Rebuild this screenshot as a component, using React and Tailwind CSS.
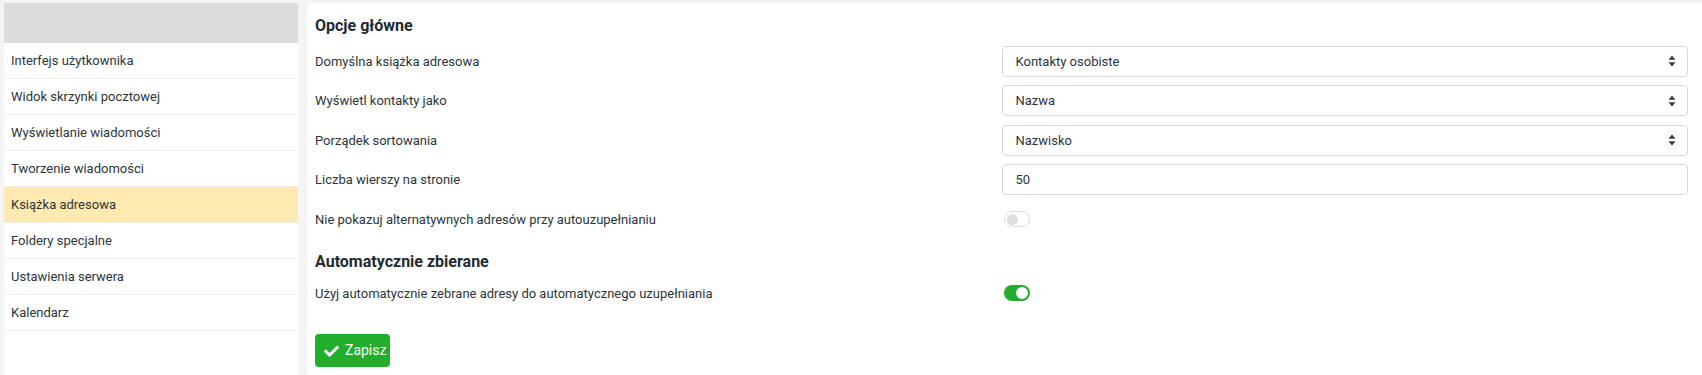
const font = { fontFamily: "Roboto, 'Open Sans', sans-serif" };

const menu = [
  "Interfejs użytkownika",
  "Widok skrzynki pocztowej",
  "Wyświetlanie wiadomości",
  "Tworzenie wiadomości",
  "Książka adresowa",
  "Foldery specjalne",
  "Ustawienia serwera",
  "Kalendarz",
];

function Arrows() {
  return (
    <svg width="8" height="12" viewBox="0 0 8 12" className="shrink-0">
      <path d="M4 0.5 L7.5 4.8 L0.5 4.8 Z" fill="#3a3f44" />
      <path d="M4 11.5 L7.5 7.2 L0.5 7.2 Z" fill="#3a3f44" />
    </svg>
  );
}

function Select({ value }) {
  return (
    <div className="flex h-[31px] w-full items-center justify-between rounded-[4px] border border-[#d4d8dc] bg-white pl-[13px] pr-[11px] text-[13px] text-[#2c363a]">
      <span>{value}</span>
      <Arrows />
    </div>
  );
}

function Input({ value }) {
  return (
    <div className="flex h-[31px] w-full items-center rounded-[4px] border border-[#d4d8dc] bg-white pl-[13px] text-[13px] text-[#2c363a]">
      {value}
    </div>
  );
}

function Toggle({ on }) {
  return on ? (
    <div className="ml-[2px] flex h-[16px] w-[26px] items-center justify-end rounded-full bg-[#22ab2c] pr-[2px]">
      <div className="h-[12px] w-[12px] rounded-full bg-white" />
    </div>
  ) : (
    <div className="ml-[2px] flex h-[16px] w-[26px] items-center rounded-full border border-[#dcdcdc] bg-white pl-[2px]">
      <div className="h-[11px] w-[11px] rounded-full bg-[#dddddd]" />
    </div>
  );
}

function Row({ label, children }) {
  return (
    <div className="grid h-[39.5px] grid-cols-2 items-center">
      <div className="text-[13px] text-[#2c363a]">{label}</div>
      <div className="flex items-center">{children}</div>
    </div>
  );
}

export default function App() {
  return (
    <div className="flex h-[375px] w-[1702px] bg-[#f4f4f4] pt-[3px] pl-[4px]" style={font}>
      {/* sidebar */}
      <div className="w-[294px] shrink-0 bg-white">
        <div className="h-[40px] bg-[#dddddd]" />
        {menu.map((m) => (
          <div
            key={m}
            className={
              "flex h-[36px] items-center border-b border-[#eeeeee] pl-[7px] text-[13px] text-[#2c363a] " +
              (m === "Książka adresowa" ? "bg-[#fee9b0]" : "")
            }
          >
            {m}
          </div>
        ))}
      </div>

      {/* main */}
      <div className="ml-[9px] flex-1 bg-white pt-[11px] pl-[8px] pr-[14px]">
        <h2 className="mb-[3.5px] h-[24px] text-[16px] leading-[24px] font-bold text-[#222b2f]">
          Opcje główne
        </h2>
        <Row label="Domyślna książka adresowa">
          <Select value="Kontakty osobiste" />
        </Row>
        <Row label="Wyświetl kontakty jako">
          <Select value="Nazwa" />
        </Row>
        <Row label="Porządek sortowania">
          <Select value="Nazwisko" />
        </Row>
        <Row label="Liczba wierszy na stronie">
          <Input value="50" />
        </Row>
        <Row label="Nie pokazuj alternatywnych adresów przy autouzupełnianiu">
          <Toggle on={false} />
        </Row>
        <h2 className="mt-[10.5px] h-[24px] text-[16px] leading-[24px] font-bold text-[#222b2f]">
          Automatycznie zbierane
        </h2>
        <Row label="Użyj automatycznie zebrane adresy do automatycznego uzupełniania">
          <Toggle on={true} />
        </Row>
        <button className="mt-[21px] flex h-[33px] w-[75px] items-center gap-[6px] rounded-[4px] bg-[#22ad2c] pl-[9px] text-[14px] text-white">
          <svg width="15" height="12" viewBox="0 0 512 410" fill="white">
            <path d="M173.9 399.5L7.5 233.1c-10-10-10-26.2 0-36.2l36.2-36.2c10-10 26.2-10 36.2 0L192 272.7 432.1 32.6c10-10 26.2-10 36.2 0l36.2 36.2c10 10 10 26.2 0 36.2L210.1 399.5c-10 10-26.2 10-36.2 0z" />
          </svg>
          Zapisz
        </button>
      </div>
    </div>
  );
}
